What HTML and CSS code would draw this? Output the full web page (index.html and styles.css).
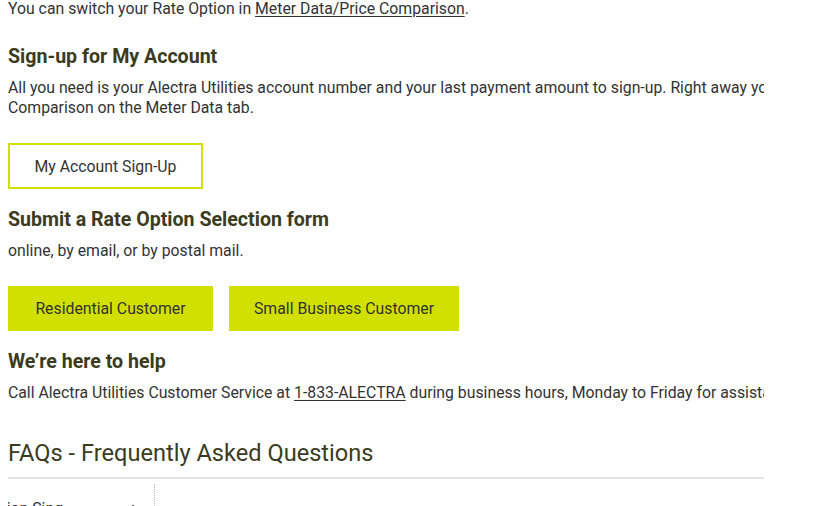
FILE: index.html
```html
<!DOCTYPE html>
<html>
<head>
<meta charset="utf-8">
<link rel="stylesheet" href="styles.css">
</head>
<body>
<div class="clip">
  <div class="content">
    <p class="text first">You can switch your Rate Option in <a href="#">Meter Data/Price Comparison</a>.</p>

    <h3 class="heading h-first">Sign-up for My Account</h3>
    <p class="text">All you need is your Alectra Utilities account number and your last payment amount to sign-up. Right away you can switch your Rate Option in Meter Data/Price<br>Comparison on the Meter Data tab.</p>
    <div class="btn-row">
      <a class="btn btn-outline" href="#">My Account Sign-Up</a>
    </div>

    <h3 class="heading">Submit a Rate Option Selection form</h3>
    <p class="text">online, by email, or by postal mail.</p>
    <div class="btn-row">
      <a class="btn btn-fill btn-res" href="#">Residential Customer</a>
      <a class="btn btn-fill btn-biz" href="#">Small Business Customer</a>
    </div>

    <h3 class="heading">We’re here to help</h3>
    <p class="text">Call Alectra Utilities Customer Service at <a href="#">1-833-ALECTRA</a> during business hours, Monday to Friday for assistance with your Rate Option selection.</p>

    <h2 class="faq-title">FAQs - Frequently Asked Questions</h2>
    <div class="faq">
      <div class="faq-nav">
        <div class="faq-item"><span class="faq-label">Rate Option Sing</span><span class="chev"></span></div>
      </div>
      <div class="faq-body"></div>
    </div>
  </div>
</div>
</body>
</html>
```
FILE: styles.css
```css
html, body {
  margin: 0;
  padding: 0;
  background: #ffffff;
}
body {
  font-family: Roboto, "Liberation Sans", sans-serif;
  color: #333333;
}
.clip {
  width: 756px;
  margin-left: 8px;
  overflow: hidden;
  height: 506px;
}
.content {
  width: 1200px;
  display: flow-root;
}
.text {
  font-size: 15.8px;
  line-height: 20px;
  margin: 0;
  white-space: nowrap;
}
.text.first {
  margin-top: -1px;
}
.text a {
  color: #333333;
  text-decoration: underline;
  text-underline-offset: 2px;
}
.heading {
  font-size: 19.6px;
  font-weight: 700;
  color: #3b3b1e;
  margin: 19px 0 9px;
  line-height: 24px;
}
.heading.h-first {
  margin-top: 26px;
}
.btn-row {
  display: flex;
  gap: 16px;
  margin: 25px 0 0;
  width: 756px;
}
.btn {
  display: flex;
  align-items: center;
  justify-content: center;
  height: 46px;
  box-sizing: border-box;
  font-size: 15.8px;
  color: #333333;
  text-decoration: none;
}
.btn-outline {
  width: 195px;
  border: 2px solid #d2e000;
}
.btn-fill {
  background: #d2e000;
  height: 45px;
}
.btn-res { width: 205px; }
.btn-biz { width: 230px; }
.faq-title {
  font-size: 23.6px;
  font-weight: 400;
  color: #3b3b1e;
  margin: 34px 0 0;
  line-height: 32px;
}
.faq {
  width: 756px;
  margin-top: 8px;
  border-top: 2px solid #e2e2e2;
  display: flex;
  padding-top: 5px;
}
.faq-nav {
  width: 146px;
  border-right: 1px dotted #b8b8b8;
  height: 40px;
  overflow: hidden;
}
.faq-item {
  display: flex;
  justify-content: space-between;
  align-items: center;
  margin-left: -62px;
  margin-top: 15px;
  font-size: 15.8px;
  color: #333;
  padding-right: 18px;
}
.chev {
  width: 5px;
  height: 5px;
  border-left: 1px solid #555;
  border-top: 1px solid #555;
  transform: rotate(45deg);
}
```
